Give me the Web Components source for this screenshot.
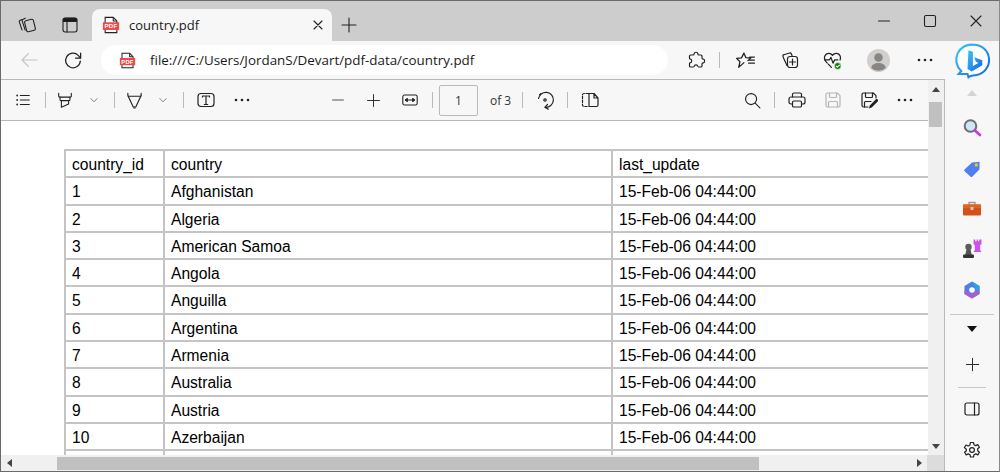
<!DOCTYPE html>
<html>
<head>
<meta charset="utf-8">
<title>country.pdf</title>
<style>
  html, body { margin: 0; height: 100%; overflow: hidden; background: #fff; }
  body { font-family: "Open Sans", "Noto Sans", sans-serif; }
</style>
</head>
<body>
<browser-window></browser-window>
<script>
// Stroke icons, 20 unit box
const ICONS = {
  collections: '<path d="M5 4.500 2.900 5.500c-.6.3-.8.8-.6 1.400l2.700 8"/><path d="M8.300 3.300 5.800 4.400c-.6.3-.8.8-.6 1.400l3 9.300"/><rect x="8.500" y="4.800" width="9" height="11.400" rx="1.600" transform="rotate(-14 13 10.500)"/>',
  tabview: '<rect x="3" y="3" width="14" height="14" rx="2.200"/><path d="M3.400 5c0-.9.7-1.600 1.600-1.600h10c.9 0 1.600.7 1.600 1.600V6.500H3.400z" fill="#1a1a1a"/><path d="M7 7v10"/>',
  close: '<path d="M5 5l10 10M15 5 5 15"/>',
  plus: '<path d="M10 3v14M3 10h14"/>',
  minimize: '<path d="M4.500 10h11"/>',
  maximize: '<rect x="4.500" y="4.500" width="11" height="11" rx="1.500"/>',
  back: '<path d="M18 10H3M9.500 3.500 3 10l6.500 6.500"/>',
  reload: '<path d="M16.500 10.500a7 7 0 1 1-2-5.400L16.500 7.500"/><path d="M16.800 3v4.800H12"/>',
  puzzle: '<path d="M8.200 3.600c.1-1.800 3.500-1.800 3.600 0 .1.800.4 1.400 1.200 1.400h2a1 1 0 0 1 1 1v2c0 .8.600 1.100 1.400 1.200 1.600.2 1.600 3.400 0 3.600-.8.1-1.400.4-1.400 1.200v2a1 1 0 0 1-1 1h-2.400c-.6 0-.8-.5-.9-1-.2-1.600-3.200-1.600-3.400 0-.1.500-.3 1-.9 1H4.500a1 1 0 0 1-1-1v-2.500c0-.6.500-.8 1-.9 1.600-.2 1.600-3.200 0-3.400-.5-.1-1-.3-1-.9V6a1 1 0 0 1 1-1H7c.8 0 1.100-.6 1.200-1.400z"/>',
  favorites: '<path d="M8.500 3 10.400 7.300l4.600.4-2.700 2.400M7.500 13 3.500 16.500l1.200-5.300L1.500 8l4.700-.5L8.500 3M13 9.600h5.500M13 12.600h5.500M14 6.700h4.500M7.500 13l1-1"/>',
  collectadd: '<path d="M7 15.500 4.200 9.600 3 6.500c-.3-.8.1-1.600.9-1.800L9.500 3c.8-.2 1.600.2 1.900 1l.7 1.800"/><rect x="7.500" y="6.500" width="10" height="11" rx="2.500"/><path d="M12.500 9v6M9.500 12h6"/>',
  health: '<path d="M10 5C8 2.500 4 2.700 2.700 5.700 1.700 8 3 10.500 5 12.500M10 5c2-2.500 6-2.300 7.300.7.500 1.200.4 2.500-.1 3.800"/><path d="M2.500 9.500H7l1.500-2.500 2 5.500 1.500-3h3"/><path d="M6 13.500l3 3"/><circle cx="15" cy="15.300" r="3.300" fill="#107c10" stroke="#fff" stroke-width=".6"/><path d="M13.500 15.300l1.100 1.100 2-2.100" stroke="#fff" stroke-width="1"/>',
  dots: '<circle cx="4" cy="10" r="1.300" fill="#222" stroke="none"/><circle cx="10" cy="10" r="1.300" fill="#222" stroke="none"/><circle cx="16" cy="10" r="1.300" fill="#222" stroke="none"/>',
  list: '<path d="M7 5h10M7 10h10M7 15h10"/><circle cx="3.500" cy="5" r="1" fill="#222" stroke="none"/><circle cx="3.500" cy="10" r="1" fill="#222" stroke="none"/><circle cx="3.500" cy="15" r="1" fill="#222" stroke="none"/>',
  highlighter: '<path d="M3 2.500v3.300c0 .6.400 1 1 1h12c.6 0 1-.4 1-1V2.500"/><path d="M4.500 6.800v3c0 .5.400.9 1 .9h9c.6 0 1-.4 1-.9v-3"/><path d="M6 10.700V18l8-3.500v-3.800"/>',
  pen: '<path d="M3 2.500v2c0 .5.200.8.500 1.200L8.800 17h2.400l5.300-11.300c.3-.4.500-.7.500-1.200v-2"/><path d="M3.500 5.500h13"/><path d="M8.800 16.500h2.400l-.7 1.700h-1z" fill="#666" stroke="#666"/>',
  textbox: '<rect x="2" y="3.500" width="16" height="13" rx="3"/><path d="M6.500 7V6h7v1M10 6v8.500M8.300 14.500h3.400"/>',
  chevron: '<path d="M5.500 8 10 12.500 14.500 8"/>',
  minus: '<path d="M4 10h12" stroke="#555"/>',
  fitwidth: '<rect x="2" y="4.500" width="16" height="11" rx="2"/><path d="M5 10h10"/><path d="M7 8.300 5 10l2 1.700zM13 8.300 15 10l-2 1.700z" fill="#222"/>',
  rotate: '<path d="M3.500 8.500a7.500 7.500 0 1 1 7 8.800"/><path d="M12.500 14.500 9.800 17.300l3.400 1.800"/><circle cx="10" cy="10" r="1.200"/><path d="M5.800 3.700 4 5.300" stroke-dasharray="1.500 1"/>',
  twopage: '<path d="M8.500 3.500H4a1.500 1.500 0 0 0-1.500 1.500v10A1.500 1.500 0 0 0 4 16.500h4.500" stroke-dasharray="2.400 1.500"/><path d="M9 3.500h5l4 4.500v7a1.500 1.500 0 0 1-1.500 1.500H9zM14 3.500V8h4"/>',
  search: '<circle cx="8.500" cy="8.500" r="5.800"/><path d="M12.800 12.800l5 5"/>',
  print: '<path d="M5.500 7V4.500A1.500 1.500 0 0 1 7 3h6a1.500 1.500 0 0 1 1.500 1.500V7"/><path d="M5.500 14H4a2 2 0 0 1-2-2V9a2 2 0 0 1 2-2h12a2 2 0 0 1 2 2v3a2 2 0 0 1-2 2h-1.500"/><rect x="5.500" y="11" width="9" height="6" rx="1.300"/>',
  save: '<path d="M3 4.500A1.500 1.500 0 0 1 4.500 3h9.800L17 5.700v9.800a1.500 1.500 0 0 1-1.500 1.500h-11A1.500 1.500 0 0 1 3 15.500z"/><path d="M6.500 3v3.500a1 1 0 0 0 1 1h5a1 1 0 0 0 1-1V3M5.500 17v-4.500a1 1 0 0 1 1-1h7a1 1 0 0 1 1 1V17"/>',
  saveas: '<path d="M9 17H4.500A1.500 1.500 0 0 1 3 15.500v-11A1.500 1.500 0 0 1 4.500 3h9.800L17 5.700V8"/><path d="M6.500 3v3.500a1 1 0 0 0 1 1h5a1 1 0 0 0 1-1V3M5.500 17v-4.500a1 1 0 0 1 1-1H12"/><path d="M10 18.500l.7-3 6-6c.6-.6 1.500-.6 2 0s.6 1.400 0 2l-6 6z" fill="#222" stroke="none"/>',
  panel: '<rect x="3" y="4" width="14" height="12" rx="2"/><path d="M12.500 4v12"/>',
  gear: '<path d="M8.500 2.500h3l.5 2.300 1.700.8 2.100-1 1.600 2.600-1.700 1.600v1.900l1.700 1.600-1.600 2.600-2.100-1-1.700.8-.5 2.300h-3l-.5-2.300-1.700-.8-2.100 1-1.600-2.600 1.700-1.600V9.200L2.400 7.600 4 5l2.100 1 1.700-.8z"/><circle cx="10" cy="10" r="2.400"/>',
  sideplus: '<path d="M10 3.500v13M3.500 10h13"/>'
};

// Coloured icons, 20 unit box
const COLOR_ICONS = {
  pdf: '<path d="M3.500 1.500h9l4 4v13h-13z" fill="#fff" stroke="#222" stroke-width="1.200"/><path d="M12.500 1.500v4h4" fill="none" stroke="#222" stroke-width="1.200"/><rect x="1" y="7" width="18" height="8.500" fill="#f04747"/><text x="10" y="13.800" text-anchor="middle" font-family="Liberation Sans" font-weight="700" font-size="6.800" letter-spacing=".3" fill="#fff">PDF</text>',
  avatar: '<circle cx="10" cy="10" r="10" fill="#d0cfcd"/><circle cx="10" cy="7.300" r="3.700" fill="#888583"/><path d="M3.700 16.500c.5-3 3-4.300 6.300-4.300s5.800 1.300 6.300 4.300A9.500 9.500 0 0 1 10 19a9.500 9.500 0 0 1-6.300-2.500z" fill="#888583"/>',
  bing: '<defs><linearGradient id="bg" x1="0" y1="0" x2="1" y2="1"><stop offset="0" stop-color="#38c6f4"/><stop offset="1" stop-color="#1366e0"/></linearGradient></defs><path d="M10.500 1.500a8.200 8.200 0 0 1 1.500 16.300c-1.600.3-3.100.3-4.200 1.200l-.5-1.700H2.500l1.400-1.600A8.200 8.200 0 0 1 10.500 1.500z" fill="#fff" stroke="url(#bg)" stroke-width="1.100"/><path d="M7.800 4.500 10.200 5.300v7.700l3-1.700-1.400-.7-.9-2.300 4.400 1.500v2.800l-5.700 3.300-2.300-1.300z" fill="url(#bg)"/>',
  magnifier: '<circle cx="8.500" cy="8" r="5.800" fill="#cfe6f5" stroke="#6e6e6e" stroke-width="2"/><path d="M13 12.500l5 4.500" stroke="#c936e3" stroke-width="2.600" stroke-linecap="round"/>',
  tag: '<path d="M2.500 10.500 10 3.500l7.500-.8v7.500l-7.200 7.500c-.5.500-1.200.5-1.700 0l-6-5.500c-.5-.5-.5-1.200-.1-1.700z" fill="#4f7ff0"/><circle cx="14.300" cy="6" r="1.700" fill="#f5c518"/>',
  toolbox: '<path d="M7 6V3.500h6V6" fill="none" stroke="#9a9a9a" stroke-width="1.400"/><rect x="1" y="5.500" width="18" height="11" rx="1" fill="#d4501a"/><rect x="1" y="5.500" width="18" height="3.500" fill="#e0641f"/><rect x="8.500" y="8" width="3" height="3" fill="#c9c9c9"/>',
  chess: '<path d="M11.500 .5h1.700v1.700h1.400V.5h1.300v1.700h1.300V.5H19.500V5l-1.300 1.300v5l1.300 1.700h-8l1.300-1.700v-5L11.500 5z" fill="#cb52ec"/><circle cx="6.500" cy="8" r="3.200" fill="#5c5c5c"/><path d="M4.500 10.500h4l1.300 5.500H3.200z" fill="#555"/><rect x="1" y="15.500" width="11" height="3.500" rx="1" fill="#333"/>',
  m365: '<path d="M10 1.500 17.500 6v8L10 18.500 2.500 14V6z" fill="#4f7fe0"/><path d="M10 1.500 17.500 6v4l-4 1V7.500z" fill="#2aa6d8"/><path d="M2.500 10v4L10 18.500l7.500-4.500v-4l-4 1-3.500 3z" fill="#a55fd0"/><circle cx="10" cy="10" r="2.800" fill="#fff"/>'
};

class UiIcon extends HTMLElement {
  connectedCallback() {
    const name = this.getAttribute('name');
    const size = this.getAttribute('size') || 20;
    const sw = this.getAttribute('sw') || 1.2;
    const color = this.getAttribute('color') || '#222';
    const plain = ICONS[name];
    const body = plain
      ? `<g fill="none" stroke="${color}" stroke-width="${sw}" stroke-linecap="round" stroke-linejoin="round">${plain}</g>`
      : COLOR_ICONS[name];
    this.attachShadow({ mode: 'open' }).innerHTML = `
      <style>:host { display: inline-flex; flex: none; } svg { display: block; }</style>
      <svg width="${size}" height="${size}" viewBox="0 0 20 20">${body}</svg>`;
  }
}
customElements.define('ui-icon', UiIcon);

// a fixed width slot with an icon in the middle
class ToolSlot extends HTMLElement {
  static get observedAttributes() { return ['w']; }
  constructor() {
    super();
    this.attachShadow({ mode: 'open' }).innerHTML = `
      <style>
        :host { display: flex; flex: none; align-items: center; justify-content: center; height: 100%; }
      </style>
      <slot></slot>`;
  }
  attributeChangedCallback(n, o, v) { this.style.width = v + 'px'; }
}
customElements.define('tool-slot', ToolSlot);

class ToolSep extends HTMLElement {
  constructor() {
    super();
    this.attachShadow({ mode: 'open' }).innerHTML = `
      <style>:host { display: block; flex: none; width: 1px; height: 16px; background: #b9b9b9; }</style>`;
  }
}
customElements.define('tool-sep', ToolSep);

class TabStrip extends HTMLElement {
  constructor() {
    super();
    this.attachShadow({ mode: 'open' }).innerHTML = `
      <style>
        :host { display: flex; height: 40px; background: #cdcdcd; align-items: stretch; }
        .left { display: flex; align-items: center; width: 91px; padding-top: 8px; box-sizing: border-box; }
        .tab {
          width: 240px; margin-top: 8px; background: #f7f7f7; border-radius: 8px 8px 0 0;
          display: flex; align-items: center; box-sizing: border-box; padding-left: 10px;
          font: 13px "Open Sans", sans-serif; color: #1a1a1a;
        }
        .tab span { margin-left: 9px; flex: 1; }
        .plus { display: flex; align-items: center; padding: 8px 0 0 7px; }
        .spacer { flex: 1; }
        .win { display: flex; align-items: center; }
      </style>
      <div class="left">
        <tool-slot w="52"><ui-icon name="collections" sw="1.100"></ui-icon></tool-slot>
        <tool-slot w="33"><ui-icon name="tabview" sw="1.100"></ui-icon></tool-slot>
      </div>
      <div class="tab">
        <ui-icon name="pdf" size="18"></ui-icon>
        <span>country.pdf</span>
        <tool-slot w="28"><ui-icon name="close" size="16" sw="1.400"></ui-icon></tool-slot>
      </div>
      <div class="plus"><ui-icon name="plus" size="20" sw="1.100"></ui-icon></div>
      <div class="spacer"></div>
      <div class="win">
        <tool-slot w="46"><ui-icon name="minimize" sw="1.100"></ui-icon></tool-slot>
        <tool-slot w="46"><ui-icon name="maximize" sw="1.100"></ui-icon></tool-slot>
        <tool-slot w="46"><ui-icon name="close" sw="1.100"></ui-icon></tool-slot>
      </div>`;
  }
}
customElements.define('tab-strip', TabStrip);

class AddressBar extends HTMLElement {
  constructor() {
    super();
    this.attachShadow({ mode: 'open' }).innerHTML = `
      <style>
        :host { display: flex; height: 38px; background: #f7f7f7; align-items: center; }
        .pill {
          width: 567px; height: 30px; margin-left: 2px; background: #fff; border-radius: 15px;
          display: flex; align-items: center; box-sizing: border-box; padding-left: 18px;
          font: 13.4px "Open Sans", sans-serif; color: #1a1a1a;
        }
        .pill span { margin-left: 14px; }
        .tools { display: flex; align-items: center; height: 100%; margin-left: 10px; }
        tool-sep { margin: 0 1px 0 5px; }
      </style>
      <tool-slot w="36" style="margin-left:10px"><ui-icon name="back" color="#c4c4c4" sw="1.100"></ui-icon></tool-slot>
      <tool-slot w="52"><ui-icon name="reload" size="21" sw="1.200"></ui-icon></tool-slot>
      <div class="pill">
        <ui-icon name="pdf" size="17"></ui-icon>
        <span>file:///C:/Users/JordanS/Devart/pdf-data/country.pdf</span>
      </div>
      <div class="tools">
        <tool-slot w="36"><ui-icon name="puzzle"></ui-icon></tool-slot>
        <tool-sep></tool-sep>
        <tool-slot w="48"><ui-icon name="favorites" size="21"></ui-icon></tool-slot>
        <tool-slot w="42"><ui-icon name="collectadd"></ui-icon></tool-slot>
        <tool-slot w="43"><ui-icon name="health" size="21"></ui-icon></tool-slot>
        <tool-slot w="49"><ui-icon name="avatar" size="23"></ui-icon></tool-slot>
        <tool-slot w="44"><ui-icon name="dots"></ui-icon></tool-slot>
        <tool-slot w="50"><ui-icon name="bing" size="37"></ui-icon></tool-slot>
      </div>`;
  }
}
customElements.define('address-bar', AddressBar);

class PdfToolbar extends HTMLElement {
  constructor() {
    super();
    this.attachShadow({ mode: 'open' }).innerHTML = `
      <style>
        :host {
          display: flex; height: 40px; background: #f7f7f7; align-items: center;
          border-bottom: 1px solid #b9b9b9; font: 12px "Open Sans", sans-serif; color: #333;
        }
        .group { display: flex; align-items: center; height: 100%; }
        .page {
          width: 39px; height: 31px; box-sizing: border-box; border: 1px solid #b9b9b9; border-radius: 2px;
          background: #f7f7f7; display: flex; align-items: center; justify-content: center;
          margin: 0 12px 0 6px;
        }
        .of { width: 32px; }
        .spacer { flex: 1; }
      </style>
      <div class="group">
        <tool-slot w="44"><ui-icon name="list" size="18"></ui-icon></tool-slot>
        <tool-sep></tool-sep>
        <tool-slot w="38"><ui-icon name="highlighter" size="18"></ui-icon></tool-slot>
        <tool-slot w="20"><ui-icon name="chevron" size="14" color="#666"></ui-icon></tool-slot>
        <tool-sep style="margin-left:10px"></tool-sep>
        <tool-slot w="38"><ui-icon name="pen" size="19"></ui-icon></tool-slot>
        <tool-slot w="20"><ui-icon name="chevron" size="14" color="#666"></ui-icon></tool-slot>
        <tool-sep style="margin-left:10px"></tool-sep>
        <tool-slot w="44"><ui-icon name="textbox" size="20"></ui-icon></tool-slot>
        <tool-slot w="28"><ui-icon name="dots"></ui-icon></tool-slot>
      </div>
      <div class="group" style="margin-left:64px">
        <tool-slot w="36"><ui-icon name="minus" size="18"></ui-icon></tool-slot>
        <tool-slot w="35"><ui-icon name="plus" size="17" sw="1.100"></ui-icon></tool-slot>
        <tool-slot w="38"><ui-icon name="fitwidth" size="18"></ui-icon></tool-slot>
        <tool-sep style="margin-left:3px"></tool-sep>
        <div class="page">1</div>
        <div class="of">of 3</div>
        <tool-sep></tool-sep>
        <tool-slot w="44"><ui-icon name="rotate"></ui-icon></tool-slot>
        <tool-sep></tool-sep>
        <tool-slot w="44"><ui-icon name="twopage"></ui-icon></tool-slot>
      </div>
      <div class="spacer"></div>
      <div class="group">
        <tool-slot w="44"><ui-icon name="search" size="19"></ui-icon></tool-slot>
        <tool-sep></tool-sep>
        <tool-slot w="44"><ui-icon name="print"></ui-icon></tool-slot>
        <tool-slot w="28"><ui-icon name="save" color="#b5b5b5"></ui-icon></tool-slot>
        <tool-slot w="44"><ui-icon name="saveas"></ui-icon></tool-slot>
        <tool-slot w="28"><ui-icon name="dots"></ui-icon></tool-slot>
      </div>
      <div style="width:9px;flex:none"></div>`;
  }
}
customElements.define('pdf-toolbar', PdfToolbar);

const countries = ['Afghanistan', 'Algeria', 'American Samoa', 'Angola', 'Anguilla',
  'Argentina', 'Armenia', 'Australia', 'Austria', 'Azerbaijan'];

class PdfTable extends HTMLElement {
  constructor() {
    super();
    const row = (a, b, c) => `<div class="row"><div>${a}</div><div>${b}</div><div>${c}</div></div>`;
    let rows = row('country_id', 'country', 'last_update');
    countries.forEach((name, i) => { rows += row(i + 1, name, '15-Feb-06 04:44:00'); });
    rows += row('', '', '');
    this.attachShadow({ mode: 'open' }).innerHTML = `
      <style>
        :host {
          display: block; width: 950px; border-top: 2px solid #c4c4c4; border-left: 2px solid #c4c4c4;
          font: 15.6px "Liberation Sans", Arial, sans-serif; color: #000;
        }
        .row {
          display: grid; grid-template-columns: 99px 448px 1fr; height: 27.3px; box-sizing: border-box;
          border-bottom: 2px solid #c4c4c4;
        }
        .row > div { padding: 4px 0 0 6px; border-right: 2px solid #c4c4c4; line-height: 19px; }
        .row:first-child > div { padding-top: 3px; }
      </style>
      ${rows}`;
  }
}
customElements.define('pdf-table', PdfTable);

class PdfView extends HTMLElement {
  constructor() {
    super();
    this.attachShadow({ mode: 'open' }).innerHTML = `
      <style>
        :host { display: block; flex: 1; min-height: 0; overflow: hidden; background: #fff; padding: 28px 0 0 63px; }
      </style>
      <pdf-table></pdf-table>`;
  }
}
customElements.define('pdf-view', PdfView);

class VScroll extends HTMLElement {
  constructor() {
    super();
    this.attachShadow({ mode: 'open' }).innerHTML = `
      <style>
        :host { display: flex; flex-direction: column; align-items: center; width: 16px; flex: none; background: #f0f0f0; }
        .up { margin-top: 7px; border: 4px solid transparent; border-top: 0; border-bottom: 5px solid #444; width: 0; }
        .thumb { margin: 10px 1px 0 0; width: 13px; height: 25px; background: #c0c0c0; }
        .spacer { flex: 1; }
        .down { margin-bottom: 6px; border: 4px solid transparent; border-bottom: 0; border-top: 5px solid #444; width: 0; }
      </style>
      <div class="up"></div>
      <div class="thumb"></div>
      <div class="spacer"></div>
      <div class="down"></div>`;
  }
}
customElements.define('v-scroll', VScroll);

class HScroll extends HTMLElement {
  constructor() {
    super();
    this.attachShadow({ mode: 'open' }).innerHTML = `
      <style>
        :host { display: flex; align-items: center; height: 16px; flex: none; background: #f0f0f0; }
        .left { margin-left: 6px; border: 4px solid transparent; border-left: 0; border-right: 5px solid #444; height: 0; }
        .thumb { margin-left: 45px; width: 702px; height: 13px; background: #c0c0c0; }
        .spacer { flex: 1; }
        .right { margin-right: 5px; border: 4px solid transparent; border-right: 0; border-left: 5px solid #444; height: 0; }
        .corner { width: 17px; height: 100%; background: #dcdcdc; }
      </style>
      <div class="left"></div>
      <div class="thumb"></div>
      <div class="spacer"></div>
      <div class="right"></div>
      <div class="corner"></div>`;
  }
}
customElements.define('h-scroll', HScroll);

class SideBar extends HTMLElement {
  constructor() {
    super();
    this.attachShadow({ mode: 'open' }).innerHTML = `
      <style>
        :host {
          display: flex; flex-direction: column; align-items: center; width: 55px; flex: none;
          box-sizing: border-box; background: #f7f7f7; border-left: 1px solid #b9b9b9;
        }
        .slot { display: flex; align-items: center; justify-content: center; flex: none; width: 100%; }
        .up { margin-top: 10px; border: 5px solid transparent; border-top: 0; border-bottom: 6px solid #d4d4d4; width: 0; }
        .down { border: 5px solid transparent; border-bottom: 0; border-top: 6px solid #111; width: 0; }
        hr { border: 0; height: 1px; background: #c9c9c9; margin: 0; flex: none; }
      </style>
      <div class="up"></div>
      <div class="slot" style="height:40px;margin-top:12px"><ui-icon name="magnifier"></ui-icon></div>
      <div class="slot" style="height:41px"><ui-icon name="tag"></ui-icon></div>
      <div class="slot" style="height:40px"><ui-icon name="toolbox"></ui-icon></div>
      <div class="slot" style="height:40px"><ui-icon name="chess"></ui-icon></div>
      <div class="slot" style="height:41px"><ui-icon name="m365"></ui-icon></div>
      <hr style="width:44px;margin-top:4px">
      <div class="slot" style="height:28px"><div class="down"></div></div>
      <div class="slot" style="height:42px"><ui-icon name="sideplus" size="19" sw="1"></ui-icon></div>
      <hr style="width:28px;margin-top:2px">
      <div class="slot" style="height:42px"><ui-icon name="panel"></ui-icon></div>
      <div class="slot" style="height:39px"><ui-icon name="gear"></ui-icon></div>`;
  }
}
customElements.define('side-bar', SideBar);

class BrowserWindow extends HTMLElement {
  constructor() {
    super();
    this.attachShadow({ mode: 'open' }).innerHTML = `
      <style>
        :host {
          display: flex; flex-direction: column; width: 1000px; height: 472px; box-sizing: border-box;
          border: 1px solid #6a6a6a; border-right-color: #8a8a8a; overflow: hidden; background: #f7f7f7;
        }
        .rule { height: 1px; background: #b9b9b9; width: 944px; flex: none; }
        .main { flex: 1; min-height: 0; display: flex; }
        .content { flex: 1; min-width: 0; display: flex; flex-direction: column; }
        .upper { flex: 1; min-height: 0; display: flex; }
        .doc { flex: 1; min-width: 0; display: flex; flex-direction: column; }
      </style>
      <tab-strip></tab-strip>
      <address-bar></address-bar>
      <div class="rule"></div>
      <div class="main">
        <div class="content">
          <div class="upper">
            <div class="doc">
              <pdf-toolbar></pdf-toolbar>
              <pdf-view></pdf-view>
            </div>
            <v-scroll></v-scroll>
          </div>
          <h-scroll></h-scroll>
        </div>
        <side-bar></side-bar>
      </div>`;
  }
}
customElements.define('browser-window', BrowserWindow);
</script>
</body>
</html>
